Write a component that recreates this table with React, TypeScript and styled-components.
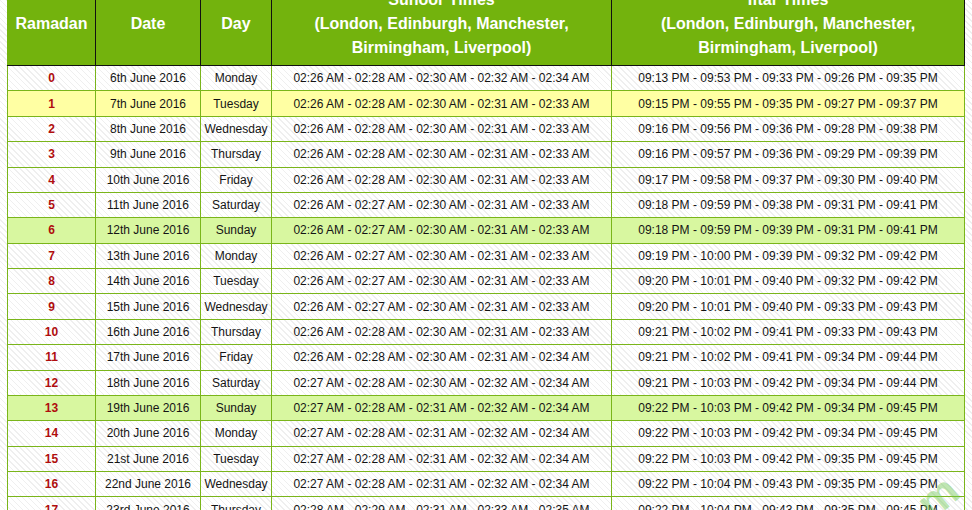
import React from "react";
import styled, { createGlobalStyle } from "styled-components";

const Global = createGlobalStyle`
  html, body {
    margin: 0;
    padding: 0;
    overflow: hidden;
    background-color: #fff;
    background-image: repeating-linear-gradient(45deg, #ffffff 0 3.2px, #efefef 3.2px 4.2px);
    font-family: "Liberation Sans", Arial, sans-serif;
  }
`;

const Page = styled.div`
  position: relative;
  height: 510px;
  overflow: hidden;
  padding-left: 7px;
`;

const Table = styled.table`
  border-collapse: collapse;
  table-layout: fixed;
  width: 957px;
  margin-top: -17px;
`;

const HeadCell = styled.th`
  background: #73b30d;
  color: #fff;
  font-weight: bold;
  font-size: 16px;
  line-height: 24px;
  padding: 5px 2px;
  text-align: center;
  border: 1px solid #111;
  border-top: none;
  &:first-child { border-left: 1px solid #73b30d; }
  &:last-child { border-right: 1px solid #111; }
`;

type Tone = "plain" | "today" | "sunday";

const Row = styled.tr<{ $tone: Tone }>`
  background: ${(p) =>
    p.$tone === "today" ? "#ffffa3" : p.$tone === "sunday" ? "#d8f7a0" : "transparent"};
`;

const Cell = styled.td<{ $num?: boolean }>`
  height: 24.375px;
  padding: 0 2px;
  border: 1px solid #7ab51a;
  text-align: center;
  vertical-align: middle;
  font-size: 12px;
  line-height: 14px;
  color: ${(p) => (p.$num ? "#b00d0d" : "#141414")};
  font-weight: ${(p) => (p.$num ? "bold" : "normal")};
  white-space: nowrap;
`;

const Watermark = styled.div`
  position: absolute;
  left: 918px;
  top: 472px;
  font-family: "Liberation Sans", Arial, sans-serif;
  font-weight: bold;
  font-size: 44px;
  color: rgba(110, 200, 80, 0.45);
  transform: rotate(-40deg);
  pointer-events: none;
`;

type Item = [string, string, string, string, string, Tone?];

const s = (a: string[]) => a.map((t) => t + " AM").join(" - ");
const i = (a: string[]) => a.map((t) => t + " PM").join(" - ");

const S1 = s(["02:26", "02:28", "02:30", "02:31", "02:33"]);
const S2 = s(["02:26", "02:27", "02:30", "02:31", "02:33"]);

const rows: Item[] = [
  ["0", "6th June 2016", "Monday", s(["02:26", "02:28", "02:30", "02:32", "02:34"]), i(["09:13", "09:53", "09:33", "09:26", "09:35"])],
  ["1", "7th June 2016", "Tuesday", S1, i(["09:15", "09:55", "09:35", "09:27", "09:37"]), "today"],
  ["2", "8th June 2016", "Wednesday", S1, i(["09:16", "09:56", "09:36", "09:28", "09:38"])],
  ["3", "9th June 2016", "Thursday", S1, i(["09:16", "09:57", "09:36", "09:29", "09:39"])],
  ["4", "10th June 2016", "Friday", S1, i(["09:17", "09:58", "09:37", "09:30", "09:40"])],
  ["5", "11th June 2016", "Saturday", S2, i(["09:18", "09:59", "09:38", "09:31", "09:41"])],
  ["6", "12th June 2016", "Sunday", S2, i(["09:18", "09:59", "09:39", "09:31", "09:41"]), "sunday"],
  ["7", "13th June 2016", "Monday", S2, i(["09:19", "10:00", "09:39", "09:32", "09:42"])],
  ["8", "14th June 2016", "Tuesday", S2, i(["09:20", "10:01", "09:40", "09:32", "09:42"])],
  ["9", "15th June 2016", "Wednesday", S2, i(["09:20", "10:01", "09:40", "09:33", "09:43"])],
  ["10", "16th June 2016", "Thursday", S1, i(["09:21", "10:02", "09:41", "09:33", "09:43"])],
  ["11", "17th June 2016", "Friday", s(["02:26", "02:28", "02:30", "02:31", "02:34"]), i(["09:21", "10:02", "09:41", "09:34", "09:44"])],
  ["12", "18th June 2016", "Saturday", s(["02:27", "02:28", "02:30", "02:32", "02:34"]), i(["09:21", "10:03", "09:42", "09:34", "09:44"])],
  ["13", "19th June 2016", "Sunday", s(["02:27", "02:28", "02:31", "02:32", "02:34"]), i(["09:22", "10:03", "09:42", "09:34", "09:45"]), "sunday"],
  ["14", "20th June 2016", "Monday", s(["02:27", "02:28", "02:31", "02:32", "02:34"]), i(["09:22", "10:03", "09:42", "09:34", "09:45"])],
  ["15", "21st June 2016", "Tuesday", s(["02:27", "02:28", "02:31", "02:32", "02:34"]), i(["09:22", "10:03", "09:42", "09:35", "09:45"])],
  ["16", "22nd June 2016", "Wednesday", s(["02:27", "02:28", "02:31", "02:32", "02:34"]), i(["09:22", "10:04", "09:43", "09:35", "09:45"])],
  ["17", "23rd June 2016", "Thursday", s(["02:28", "02:29", "02:31", "02:33", "02:35"]), i(["09:22", "10:04", "09:43", "09:35", "09:45"])],
  ["18", "24th June 2016", "Friday", s(["02:28", "02:29", "02:32", "02:33", "02:35"]), i(["09:23", "10:04", "09:43", "09:35", "09:46"])],
];

export default function App() {
  return (
    <>
      <Global />
      <Page>
        <Table>
          <colgroup>
            <col style={{ width: 88 }} />
            <col style={{ width: 105 }} />
            <col style={{ width: 71 }} />
            <col style={{ width: 340 }} />
            <col style={{ width: 353 }} />
          </colgroup>
          <thead>
            <tr>
              <HeadCell>Ramadan</HeadCell>
              <HeadCell>Date</HeadCell>
              <HeadCell>Day</HeadCell>
              <HeadCell>
                Suhoor Times
                <br />
                (London, Edinburgh, Manchester,
                <br />
                Birmingham, Liverpool)
              </HeadCell>
              <HeadCell>
                Iftar Times
                <br />
                (London, Edinburgh, Manchester,
                <br />
                Birmingham, Liverpool)
              </HeadCell>
            </tr>
          </thead>
          <tbody>
            {rows.map(([n, date, day, su, ift, tone]) => (
              <Row key={n} $tone={tone ?? "plain"}>
                <Cell $num>{n}</Cell>
                <Cell>{date}</Cell>
                <Cell>{day}</Cell>
                <Cell>{su}</Cell>
                <Cell>{ift}</Cell>
              </Row>
            ))}
          </tbody>
        </Table>
        <Watermark>m</Watermark>
      </Page>
    </>
  );
}
